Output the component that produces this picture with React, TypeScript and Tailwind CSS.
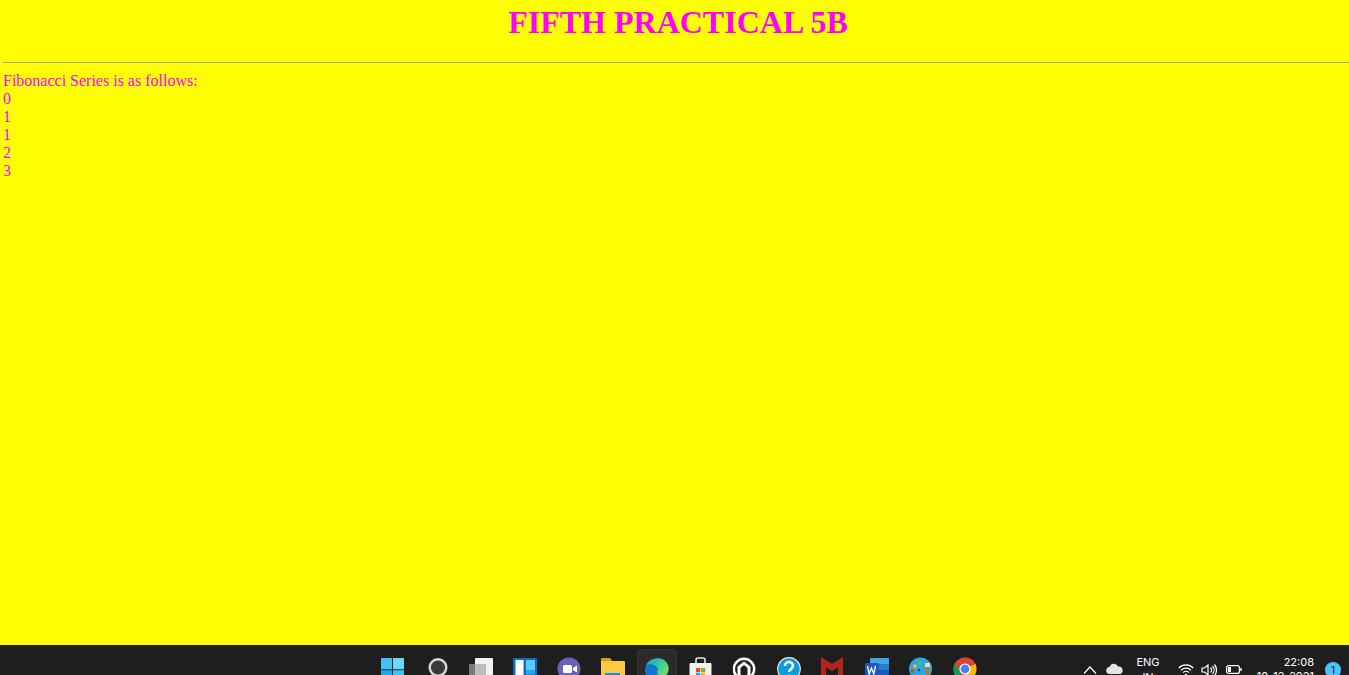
import React from "react";

const Slot = ({ children, active }: { children: React.ReactNode; active?: boolean }) => (
  <div className={`shrink-0 flex justify-center rounded-[4px] ${active ? "w-[40px] h-[40px] mx-[2px] mt-[4px] pt-[8px] bg-[#2b2b2b] border border-[#333333]" : "w-[44px] h-[40px] pt-[12px]"}`}>
    {children}
  </div>
);

const Icon = ({ children }: { children: React.ReactNode }) => (
  <svg width="24" height="24" viewBox="0 0 24 24" className="shrink-0">
    {children}
  </svg>
);

const TaskbarIcons = () => (
  <div className="flex ml-[371px]">
    <Slot>
      <Icon>
        <rect x="0" y="1" width="11" height="11.300" fill="#3cc4f6" />
        <rect x="12" y="1" width="11" height="11.300" fill="#68d8fb" />
        <rect x="0" y="13.200" width="11" height="11" fill="#1fa8e8" />
        <rect x="12" y="13.200" width="11" height="11" fill="#3cc4f6" />
      </Icon>
    </Slot>
    <Slot>
      <Icon>
        <circle cx="13" cy="10.500" r="8.300" fill="#3a3a3a" stroke="#d8d8d8" strokeWidth="2.400" />
      </Icon>
    </Slot>
    <Slot>
      <Icon>
        <rect x="6" y="1" width="18" height="17" rx="1" fill="#f2f2f2" />
        <rect x="0" y="7" width="17" height="17" rx="1" fill="#7a7a7a" />
        <rect x="6" y="7" width="11" height="11" fill="#bdbdbd" />
      </Icon>
    </Slot>
    <Slot>
      <Icon>
        <rect x="0" y="1" width="24" height="23" rx="1" fill="#0a6fc2" />
        <rect x="2.500" y="3" width="8" height="20" fill="#ffffff" />
        <rect x="13" y="3" width="9" height="10.500" fill="#5cc8fb" />
        <rect x="13" y="13.500" width="9" height="4" fill="#2ba8ee" />
      </Icon>
    </Slot>
    <Slot>
      <Icon>
        <circle cx="12" cy="12" r="11.500" fill="#6a63bb" />
        <rect x="6" y="8" width="9" height="8" rx="1.500" fill="#ffffff" />
        <path d="M16 11l4-2.500v7L16 13z" fill="#ffffff" />
      </Icon>
    </Slot>
    <Slot>
      <Icon>
        <path d="M0 2a1 1 0 011-1h8l3 4H0z" fill="#d59a14" />
        <rect x="0" y="4" width="24" height="21" rx="1" fill="#fcc942" />
        <rect x="4" y="16" width="15" height="9" fill="#1a8fd6" />
      </Icon>
    </Slot>
    <Slot active>
      <Icon>
        <defs>
          <linearGradient id="edgeTop" x1="0" y1="0" x2="1" y2="0.600">
            <stop offset="0" stopColor="#1c9ad6" />
            <stop offset="0.550" stopColor="#33c6a0" />
            <stop offset="1" stopColor="#6fdc6b" />
          </linearGradient>
        </defs>
        <circle cx="11.500" cy="12.500" r="11.500" fill="#1276cf" />
        <path d="M1 7C5-1 19-3 23 7c2 6-1 11-6 11-4 0-6-3-4-6 0-4-6-7-12-5z" fill="url(#edgeTop)" />
        <path d="M14 19c2 1.500 6 1 10-3v9H13z" fill="#2b2b2b" />
      </Icon>
    </Slot>
    <Slot>
      <Icon>
        <path d="M7 6V3a2 2 0 012-2h5a2 2 0 012 2v3" fill="none" stroke="#e6e6e6" strokeWidth="1.600" />
        <rect x="0.500" y="6" width="22" height="19" rx="1" fill="#f2f2f2" />
        <rect x="7" y="11" width="4.300" height="4.300" fill="#e8502a" />
        <rect x="12" y="11" width="4.300" height="4.300" fill="#7cb82f" />
        <rect x="7" y="16" width="4.300" height="4.300" fill="#1fa4e8" />
        <rect x="12" y="16" width="4.300" height="4.300" fill="#f7b916" />
      </Icon>
    </Slot>
    <Slot>
      <Icon>
        <circle cx="11" cy="12" r="10.200" fill="none" stroke="#ffffff" strokeWidth="2.500" />
        <path d="M11 4.500L4.500 9.500V24h3V11L11 8l3.500 3v13h3V9.500z" fill="#ffffff" />
      </Icon>
    </Slot>
    <Slot>
      <Icon>
        <circle cx="12" cy="12" r="11.300" fill="#0d9bdb" stroke="#e8e8e8" strokeWidth="1.200" />
        <path d="M8 9a4 4 0 118 0c0 3-4 3-4 6" fill="none" stroke="#ffffff" strokeWidth="2.600" />
        <circle cx="12" cy="19" r="1.600" fill="#ffffff" />
      </Icon>
    </Slot>
    <Slot>
      <Icon>
        <path d="M0 0l11 7 11-7v18l-5 6V10l-6 4-6-4v14l-5-6z" fill="#b3261e" />
      </Icon>
    </Slot>
    <Slot>
      <Icon>
        <rect x="5" y="1" width="19" height="23" rx="1" fill="#2b7cd3" />
        <rect x="5" y="1" width="19" height="6" rx="1" fill="#41a5ee" />
        <rect x="5" y="13" width="19" height="6" fill="#185abd" />
        <rect x="0" y="6" width="14" height="14" rx="1" fill="#1a5cb8" />
        <path d="M2.500 9l1.700 8 2.300-6 2.300 6 1.700-8" fill="none" stroke="#ffffff" strokeWidth="1.300" />
      </Icon>
    </Slot>
    <Slot>
      <Icon>
        <circle cx="11.500" cy="12" r="11.500" fill="#29a9e0" />
        <circle cx="6" cy="9" r="2" fill="#f0b323" />
        <circle cx="10.500" cy="5.500" r="1.800" fill="#5fb946" />
        <circle cx="3.500" cy="14" r="2" fill="#e2432e" />
        <circle cx="10" cy="13" r="1.200" fill="#1c3f5e" />
        <rect x="16" y="6" width="5" height="4" fill="#ead9b0" />
        <rect x="17" y="10" width="3" height="14" fill="#c8761e" />
      </Icon>
    </Slot>
    <Slot>
      <Icon>
        <circle cx="12" cy="12" r="11.500" fill="#db4437" />
        <path d="M12 12l11.500 0A11.500 11.500 0 0112 23.500z" fill="#fbbc05" />
        <path d="M12 .5A11.500 11.500 0 0122.500 7H12z" fill="#db4437" />
        <path d="M2 6l6 11 4 6.500A11.500 11.500 0 012 6z" fill="#0f9d58" />
        <path d="M12 12l10.500-5a11.500 11.500 0 011 5z" fill="#fbbc05" />
        <circle cx="12" cy="12" r="5.600" fill="#ffffff" />
        <circle cx="12" cy="12" r="4.400" fill="#4285f4" />
      </Icon>
    </Slot>
  </div>
);

const Tray = () => (
  <div className="ml-auto flex text-white font-['Inter',sans-serif] text-[11px] leading-[14px]">
    <svg width="14" height="8" viewBox="0 0 14 8" className="mt-[21px] mr-[9px]">
      <path d="M1 7.500L7 1l6 6.500" fill="none" stroke="#ffffff" strokeWidth="1.200" />
    </svg>
    <svg width="17" height="12" viewBox="0 0 17 12" className="mt-[18px] mr-[9px]">
      <path d="M4 11a3.500 3.500 0 01-.5-7A4.500 4.500 0 0112 3.500 3.800 3.800 0 0113.500 11z" fill="#e4e4e4" />
    </svg>
    <div className="w-[32px] pt-[10px] text-center mr-[14px] leading-[15px]">
      <div>ENG</div>
      <div>IN</div>
    </div>
    <svg width="16" height="14" viewBox="0 0 16 14" className="mt-[18px] mr-[7px]" fill="none" stroke="#ffffff" strokeWidth="1.200">
      <path d="M.8 5a10 10 0 0114.400 0M3 7.300a7 7 0 0110 0M5.200 9.600a4 4 0 015.600 0" />
      <circle cx="8" cy="12" r="1.200" fill="#ffffff" stroke="none" />
    </svg>
    <svg width="16" height="14" viewBox="0 0 16 14" className="mt-[18px] mr-[9px]" fill="none" stroke="#ffffff" strokeWidth="1.200">
      <path d="M1 5h2.500L7 2v10L3.500 9H1z" />
      <path d="M9.500 4.500a3.500 3.500 0 010 5M11.500 3a6 6 0 010 8M13.500 1.500a8.500 8.500 0 010 11" />
    </svg>
    <svg width="16" height="9" viewBox="0 0 16 9" className="mt-[20px] mr-[12px]" fill="none" stroke="#ffffff" strokeWidth="1.200">
      <rect x="0.600" y="0.600" width="12.800" height="7.800" rx="2" />
      <rect x="2" y="2" width="3" height="5" fill="#ffffff" stroke="none" />
      <path d="M15 3v3" strokeWidth="1.500" />
    </svg>
    <div className="w-[60px] pt-[10px] text-right leading-[14px]">
      <div>22:08</div>
      <div className="whitespace-nowrap">10-12-2021</div>
    </div>
    <div className="w-[16px] h-[16px] mt-[17px] ml-[11px] mr-[8px] rounded-full bg-[#4cc2ff] text-[#1c1c1c] text-[10px] leading-[16px] text-center">
      1
    </div>
  </div>
);

export default function App() {
  return (
    <div className="h-screen flex flex-col overflow-hidden bg-[#ffff00] font-['Liberation_Serif',serif] text-[#ff00ff]">
      <main className="flex-1 pl-[3px]">
        <h1 className="text-[32px] leading-[37px] font-bold text-center mt-[4px] pl-[4px]">FIFTH PRACTICAL 5B</h1>
        <hr className="mt-[21px] mb-[9px] border-0 border-t border-[#a0a0a0]" />
        <div className="text-[16px] leading-[18px]">
          <div>Fibonacci Series is as follows:</div>
          <div>0</div>
          <div>1</div>
          <div>1</div>
          <div>2</div>
          <div>3</div>
        </div>
      </main>
      <footer className="h-[30px] shrink-0 flex bg-[#1e1e1e] overflow-hidden">
        <TaskbarIcons />
        <Tray />
      </footer>
    </div>
  );
}
